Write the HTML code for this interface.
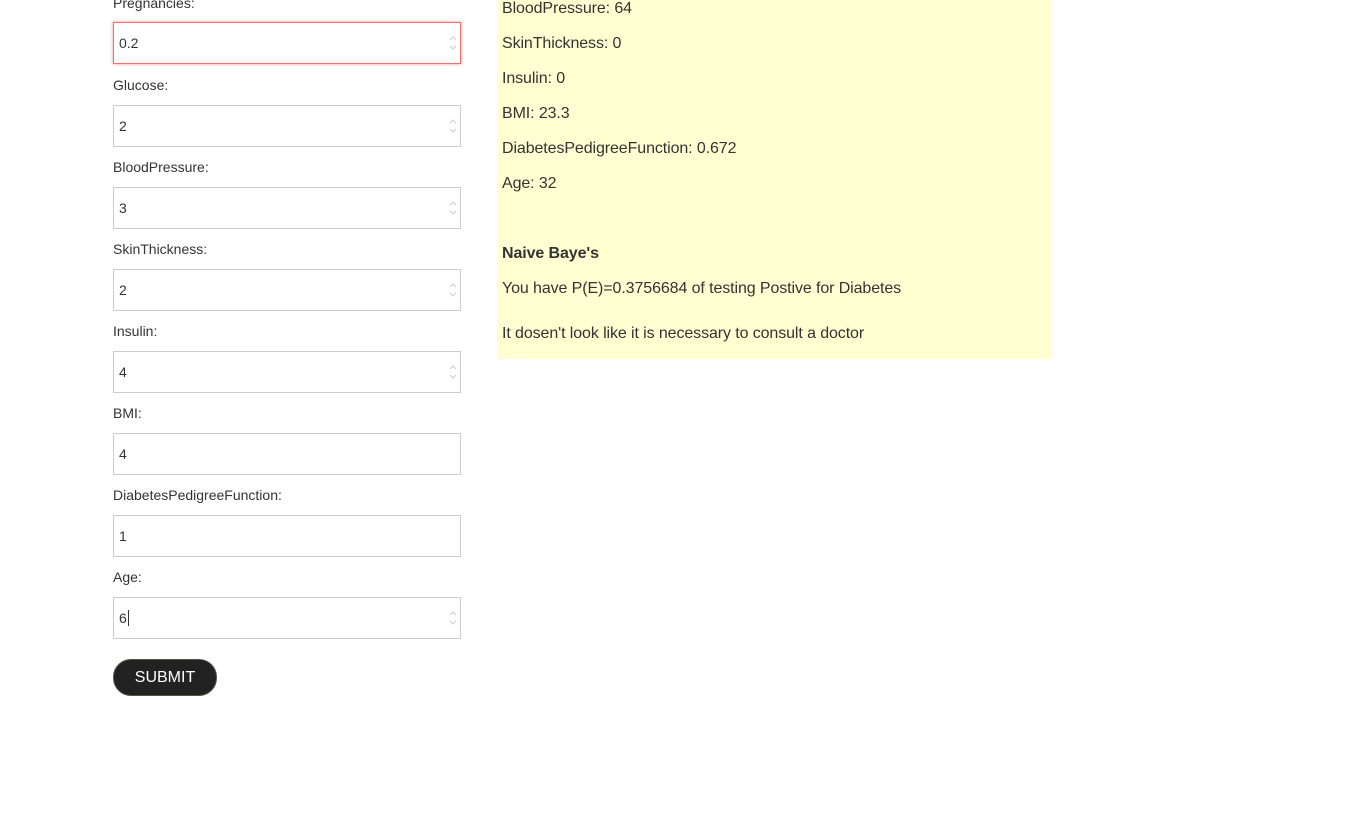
<!DOCTYPE html>
<html><head><style>
body{margin:0;width:1354px;height:826px;background:#fff;font-family:"Liberation Sans",sans-serif;color:#333;position:relative;overflow:hidden}
.l{position:absolute;left:113px;font-size:14px;line-height:16px}
.i{position:absolute;left:113px;width:346px;height:40px;border:1px solid #ccc;background:#fff;font-size:14px;box-sizing:content-box}
.i span{position:absolute;left:5px;top:12px;line-height:16px}
.sp{position:absolute;right:3px;top:12px;width:8px;height:16px}
.panel{position:absolute;left:497px;top:0;width:555px;height:359px;background:#ffffd2}
.t{position:absolute;left:5px;font-size:16px;line-height:18px;color:#333;letter-spacing:-0.1px}
</style></head><body>
<div class="l" style="top:-5px">Pregnancies:</div>
<div class="i" style="top:22px;border:1px solid #f07070;box-shadow:0 0 3px #f88"><span>0.2</span><svg class="sp" viewBox="0 0 8 16"><path d="M1 5L4 2L7 5M1 11L4 14L7 11" fill="none" stroke="#ccc"/></svg></div>
<div class="l" style="top:77px">Glucose:</div>
<div class="i" style="top:105px"><span>2</span><svg class="sp" viewBox="0 0 8 16"><path d="M1 5L4 2L7 5M1 11L4 14L7 11" fill="none" stroke="#ccc"/></svg></div>
<div class="l" style="top:159px">BloodPressure:</div>
<div class="i" style="top:187px"><span>3</span><svg class="sp" viewBox="0 0 8 16"><path d="M1 5L4 2L7 5M1 11L4 14L7 11" fill="none" stroke="#ccc"/></svg></div>
<div class="l" style="top:241px">SkinThickness:</div>
<div class="i" style="top:269px"><span>2</span><svg class="sp" viewBox="0 0 8 16"><path d="M1 5L4 2L7 5M1 11L4 14L7 11" fill="none" stroke="#ccc"/></svg></div>
<div class="l" style="top:323px">Insulin:</div>
<div class="i" style="top:351px"><span>4</span><svg class="sp" viewBox="0 0 8 16"><path d="M1 5L4 2L7 5M1 11L4 14L7 11" fill="none" stroke="#ccc"/></svg></div>
<div class="l" style="top:405px">BMI:</div>
<div class="i" style="top:433px"><span>4</span></div>
<div class="l" style="top:487px">DiabetesPedigreeFunction:</div>
<div class="i" style="top:515px"><span>1</span></div>
<div class="l" style="top:569px">Age:</div>
<div class="i" style="top:597px"><span>6<span style="position:static;border-left:1px solid #333;margin-left:1px"></span></span><svg class="sp" viewBox="0 0 8 16"><path d="M1 5L4 2L7 5M1 11L4 14L7 11" fill="none" stroke="#ccc"/></svg></div>
<div style="position:absolute;left:113px;top:659px;width:102px;height:35px;border:1px solid #554;border-radius:18px;background:#222;color:#fff;font-size:16px;text-align:center;line-height:35px">SUBMIT</div>
<div class="panel">
<div class="t" style="top:0px">BloodPressure: 64</div>
<div class="t" style="top:35px">SkinThickness: 0</div>
<div class="t" style="top:70px">Insulin: 0</div>
<div class="t" style="top:105px">BMI: 23.3</div>
<div class="t" style="top:140px">DiabetesPedigreeFunction: 0.672</div>
<div class="t" style="top:175px">Age: 32</div>
<div class="t" style="top:245px;font-weight:bold">Naive Baye's</div>
<div class="t" style="top:280px">You have P(E)=0.3756684 of testing Postive for Diabetes</div>
<div class="t" style="top:325px">It dosen't look like it is necessary to consult a doctor</div>
</div>
</body></html>
